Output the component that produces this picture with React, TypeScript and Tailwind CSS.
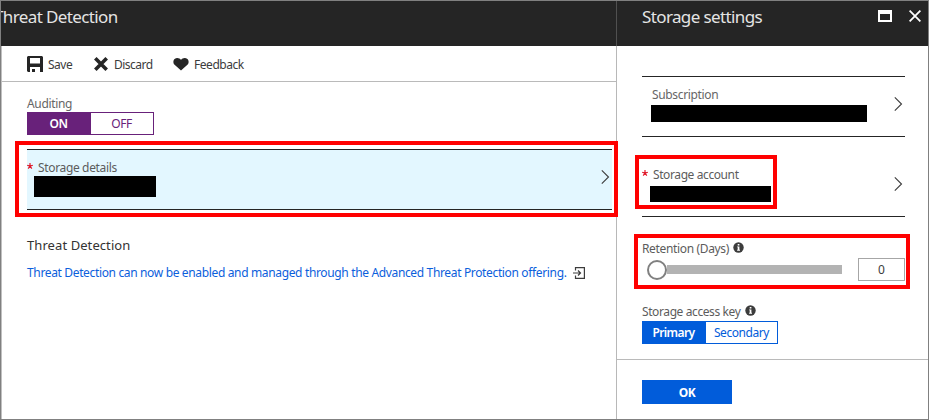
import React from "react";

function Chevron({ className = "" }: { className?: string }) {
  return (
    <svg className={`block h-4 w-2.5 shrink-0 ${className}`} viewBox="0 0 10 16" fill="none" stroke="#3c3c3c" strokeWidth="1.1">
      <path d="M.8 1.300 7.500 8 .8 14.700" />
    </svg>
  );
}

function Info() {
  return (
    <svg className="-mt-[3px] -ml-px block h-[11px] w-[11px] shrink-0" viewBox="0 0 11 11">
      <circle cx="5.5" cy="5.5" r="5.2" fill="#3c3c3c" />
      <path d="M4.700 2h1.700v1.400H4.700zM4.100 4.400h2.300v3.400h.6v.9H4.100v-.9h.6V5.300h-.6z" fill="#fff" />
    </svg>
  );
}

function Required() {
  return (
    <svg className="block h-[7px] w-[7px] shrink-0" viewBox="0 0 7 7" stroke="#e51c2e" strokeWidth="1.2">
      <path d="M3 0v3.200M.2 2.200 3 3.200l2.800-1M3 3.200 1.200 5.700M3 3.200l1.800 2.500" />
    </svg>
  );
}

function SaveIcon() {
  return (
    <svg className="block h-4 w-4 shrink-0" viewBox="0 0 16 16">
      <path fillRule="evenodd" fill="#252525" d="M1 0h14l1 1v15h-3v-5H3v5H1l-1-1V1zM3 2v5.500h10V2z" />
      <path d="M5 13h3v3H5z" fill="#252525" />
    </svg>
  );
}

export default function App() {
  return (
    <div className="relative flex h-[420px] w-[929px] overflow-hidden border border-[#808080] bg-white font-['Noto_Sans','Open_Sans',sans-serif] text-[12px] leading-4 text-[#3c3c3c]">
      <main className="flex w-[615px] shrink-0 flex-col">
        <header className="h-[45px] overflow-hidden bg-[#252525] pt-1">
          <h1 className="-ml-[7px] whitespace-nowrap text-[17px] leading-6 tracking-[-0.62px] text-[#e4e4e4]">Threat Detection</h1>
        </header>
        <div className="flex grow flex-col border-l border-[#c0c0c0]">
          <div className="flex h-9 items-center border-b border-[#bababa] pl-[25px] whitespace-nowrap">
            <div className="flex w-[66px] items-center gap-[5px]">
              <SaveIcon />
              <span className="pt-0.5 tracking-[-0.5px]">Save</span>
            </div>
            <div className="flex w-[80px] items-center gap-[5px]">
              <svg className="block h-[14px] w-4 shrink-0" viewBox="0 0 16 14" stroke="#252525" strokeWidth="3.6">
                <path d="m2.300 1.300 11.400 11.400m0-11.400L2.300 12.700" />
              </svg>
              <span className="pt-0.5 tracking-[-0.5px]">Discard</span>
            </div>
            <div className="flex items-center gap-[5px]">
              <svg className="mt-px block h-[13px] w-4 shrink-0" viewBox="0 0 16 13" fill="#252525">
                <path d="M8 12.600 1.600 6.800C-.2 5 .2 2.200 1.600 1 3.600-.6 6.600-.1 8 2c1.400-2.100 4.400-2.600 6.400-1 1.400 1.200 1.800 4 0 5.800z" />
              </svg>
              <span className="pt-0.5 tracking-[-0.45px]">Feedback</span>
            </div>
          </div>

          <div className="pt-[14px] pl-[25px]">
            <div className="tracking-[-0.35px] text-[#666]">Auditing</div>
            <div className="flex h-[23px] w-[127px] border border-[#68217a] text-center leading-[22px]">
              <button className="w-[63px] bg-[#68217a] pr-0.5 font-semibold tracking-[-0.5px] text-white">ON</button>
              <button className="grow pr-px tracking-[-0.4px] text-[#68217a]">OFF</button>
            </div>
          </div>

          <section className="z-10 mt-1.5 ml-[13px] h-[76px] w-[603px] shrink-0 border-4 border-[#ff0000] bg-white px-2 py-1 pr-[2px]">
            <div className="flex h-[61px] items-start border-y border-[#252525] bg-[#e3f7ff]">
              <div className="pt-[13px]"><Required /></div>
              <div className="grow pt-[10px]">
                <div className="ml-1 tracking-[-0.35px] text-[#5c5c5c]">Storage details</div>
                <div className="h-[21px] w-[122px] bg-black" />
              </div>
              <Chevron className="mt-[19px] mr-px" />
            </div>
          </section>

          <section className="pt-[18px] pl-[25px]">
            <h2 className="text-[13px] leading-5 tracking-[0.08px] text-[#333]">Threat Detection</h2>
            <div className="mt-[10px] flex items-center whitespace-nowrap">
              <a className="w-[546px] tracking-[-0.35px] text-[#0b60dc]">Threat Detection can now be enabled and managed through the Advanced Threat Protection offering.</a>
              <svg className="block h-3 w-3 shrink-0" viewBox="0 0 12 12" fill="none" stroke="#3c3c3c" strokeWidth="1.200">
                <path d="M2.500 3.500V.6h8.900v10.800H2.500V8.500M0 6h7.500M5 3.500 7.500 6 5 8.500" />
              </svg>
            </div>
          </section>
        </div>
      </main>

      <aside className="flex w-[312px] shrink-0 flex-col border-l border-[#b8b8b8]">
        <header className="-ml-px flex h-[45px] shrink-0 items-start border-l border-[#505050] bg-[#252525] pt-1 pl-[25px]">
          <h1 className="w-[236px] whitespace-nowrap text-[17px] leading-6 tracking-[-0.620px] text-[#e4e4e4]">Storage settings</h1>
          <div className="mt-[5px] h-3 w-[14px] border-2 border-t-4 border-white" />
          <svg className="mt-[5px] ml-[17px] block h-3 w-3" viewBox="0 0 12 12" stroke="#fff" strokeWidth="1.800">
            <path d="m.6.6 10.800 10.800M11.400.6.6 11.400" />
          </svg>
        </header>

        <div className="h-[313px] shrink-0 pt-[30px] pl-[25px]">
          <section className="flex h-[61px] w-[263px] items-start border-y border-[#252525]">
            <div className="grow pt-[10px] pl-[9px]">
              <div className="ml-px tracking-[-0.35px] text-[#666]">Subscription</div>
              <div className="mt-[2px] h-[17px] w-[216px] bg-black" />
            </div>
            <Chevron className="mt-[19px] mr-[1px]" />
          </section>

          <section className="flex h-20 w-[263px] items-start justify-between border-b border-[#252525] pt-[18px]">
            <div className="-ml-[7px] flex h-[54px] w-[142px] border-4 border-[#ff0000] pl-[3px]">
              <div className="pt-[11px]"><Required /></div>
              <div className="pt-[8px] pl-px">
                <div className="ml-[3px] whitespace-nowrap tracking-[-0.4px] text-[#5c5c5c]">Storage account</div>
                <div className="mt-[3px] h-4 w-[121px] bg-black" />
              </div>
            </div>
            <Chevron className="mt-[21px] mr-[1px]" />
          </section>

          <section className="mt-[17px] -ml-2 h-[55px] w-[276px] border-4 border-[#ff0000] pt-[3px] pl-1">
            <div className="flex h-4 items-center gap-[5px] whitespace-nowrap">
              <span className="w-[87px] tracking-[-0.350px] text-[#5c5c5c]">Retention (Days)</span>
              <Info />
            </div>
            <div className="mt-px flex h-[23px] items-center">
              <div className="ml-[5px] h-5 w-5 shrink-0 rounded-full border-2 border-[#808080] bg-white" />
              <div className="h-[9px] w-[175px] bg-[#b3b3b3]" />
              <div className="ml-4 h-[23px] w-[47px] border border-[#a6a6a6] text-center leading-[21px]">0</div>
            </div>
          </section>

          <section className="pt-[15px]">
            <div className="flex h-4 items-center gap-[5px] whitespace-nowrap">
              <span className="w-[99px] tracking-[-0.400px] text-[#5c5c5c]">Storage access key</span>
              <Info />
            </div>
            <div className="mt-px flex h-[23px] w-[136px] border border-[#015cda] text-center leading-[22px]">
              <button className="w-[63px] bg-[#015cda] pr-0.5 font-semibold tracking-[-0.600px] text-white">Primary</button>
              <button className="grow tracking-[-0.430px] text-[#015cda]">Secondary</button>
            </div>
          </section>
        </div>

        <footer className="grow border-t border-[#bababa] pt-5 pl-[25px]">
          <button className="block h-6 w-[90px] bg-[#015cda] pt-px text-[12px] font-bold tracking-[-0.500px] text-white">OK</button>
        </footer>
      </aside>
    </div>
  );
}
